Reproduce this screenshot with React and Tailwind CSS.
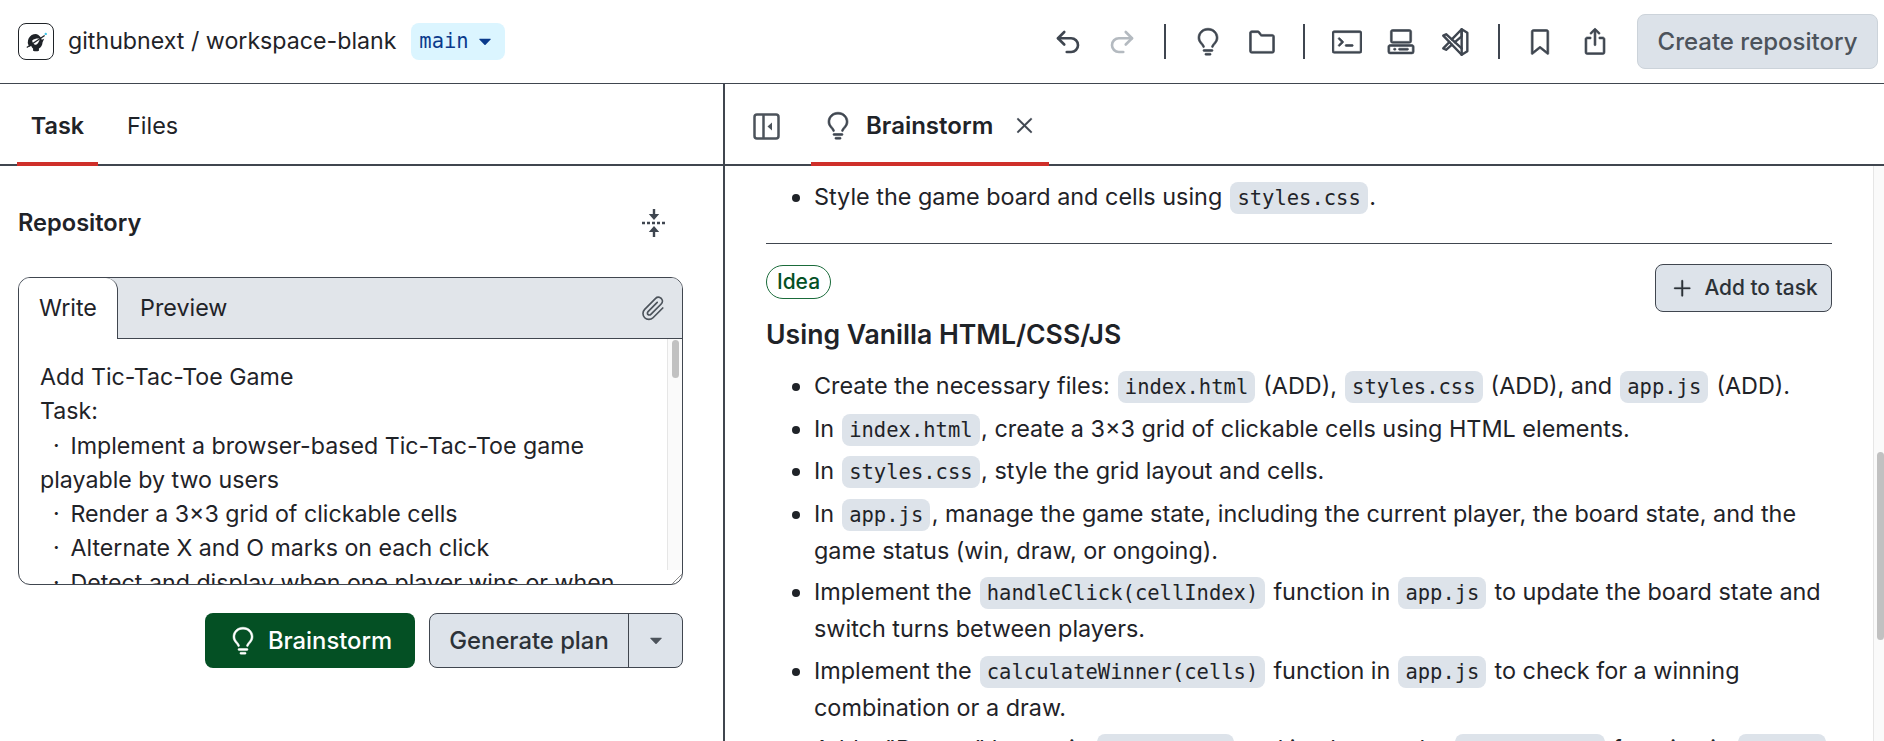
import { Undo2, Redo2 } from 'lucide-react';
import {
  GoLightBulb,
  GoFileDirectory,
  GoTerminal,
  GoCodespaces,
  GoBookmark,
  GoShare,
  GoPaperclip,
  GoX,
  GoPlus,
  GoTriangleDown,
} from 'react-icons/go';
import { TbBrandVscode } from 'react-icons/tb';

const Code = ({ children }) => (
  <code className="mx-[1.5px] rounded-lg bg-[#dde3ea] px-[7px] py-[4px] font-['DejaVu_Sans_Mono',monospace] text-[20.5px] text-[#1f2328]">
    {children}
  </code>
);

const Divider = ({ className }) => <div className={`h-[35px] w-[2px] bg-[#3f4650] ${className}`} />;

function Logo() {
  return (
    <div className="flex h-[37px] w-[36px] items-center justify-center rounded-lg border border-[#1f2328]">
      <svg viewBox="0 0 24 24" className="h-[26px] w-[26px]">
        <path
          fill="#1f2328"
          d="M12 4.500a7.500 7.500 0 0 0-6 12l1.500-1c.4 1 1 2 1.800 2.500V20a7.500 7.500 0 0 0 5.400 0v-2c2-1.200 3.300-3.400 3.300-5.600l1.500-3.400-2.200 1A7.500 7.500 0 0 0 12 4.500Z"
        />
        <path fill="#fff" d="M8.500 10.500c2-1.500 5-2 7-1.500-.3 2.500-2 5-3.500 5.500-1.500.4-3.500-2-3.500-4Z" />
        <path stroke="#1f2328" strokeWidth="1.200" d="M3.500 17 20 6" />
        <circle cx="21" cy="4.500" r="1.100" fill="#3fc6e8" />
      </svg>
    </div>
  );
}

function Header() {
  return (
    <header className="flex h-[84px] shrink-0 items-center border-b border-[#40464f] pl-[18px] pr-[6px]">
      <Logo />
      <span className="ml-[14px] text-[23.2px] text-[#1f2328]">githubnext / workspace-blank</span>
      <button className="ml-[14px] flex h-[37px] w-[94px] items-center justify-center gap-[9px] rounded-lg bg-[#dbf5ff] font-['DejaVu_Sans_Mono',monospace] text-[20.5px] text-[#0a3a8c]">
        main
        <GoTriangleDown className="-ml-[4px] h-[22px] w-[22px]" />
      </button>

      <div className="ml-auto flex items-center text-[#3f4650]">
        <Undo2 className="h-[30px] w-[30px]" strokeWidth={2.1} />
        <Redo2 className="ml-[24px] h-[30px] w-[30px] text-[#b4bac0]" strokeWidth={2.1} />
        <Divider className="mx-[27px]" />
        <GoLightBulb className="h-[30px] w-[30px] stroke-current stroke-[0.5]" />
        <GoFileDirectory className="ml-[24px] h-[30px] w-[30px] stroke-current stroke-[0.5]" />
        <Divider className="ml-[26px] mr-[27px]" />
        <GoTerminal className="h-[30px] w-[30px] stroke-current stroke-[0.5]" />
        <GoCodespaces className="ml-[24px] h-[30px] w-[30px] stroke-current stroke-[0.5]" />
        <TbBrandVscode className="ml-[23px] -mr-[2px] h-[34px] w-[34px]" strokeWidth={1.7} />
        <Divider className="ml-[27px] mr-[25px]" />
        <GoBookmark className="h-[30px] w-[30px] stroke-current stroke-[0.5]" />
        <GoShare className="ml-[25px] h-[30px] w-[30px] stroke-current stroke-[0.5]" />
        <button className="ml-[27px] h-[55px] w-[241px] rounded-lg border border-[#ccd3da] bg-[#dce2e9] text-[24px] font-medium text-[#4c535b]">
          Create repository
        </button>
      </div>
    </header>
  );
}

function TaskPanel() {
  return (
    <aside className="flex w-[725px] shrink-0 flex-col border-r-2 border-[#40464f]">
      <div className="flex h-[82px] shrink-0 border-b-2 border-[#40464f] pl-[17px] text-[23.4px] text-[#1f2328]">
        <div className="-mb-[2px] flex w-[81px] items-center justify-center border-b-4 border-[#cf2f2a] pt-[5px] font-semibold">
          Task
        </div>
        <div className="ml-[29px] flex items-center pt-[3px]">Files</div>
      </div>

      <div className="flex items-center justify-between pl-[18px] pr-[57px] pt-[39px]">
        <h2 className="text-[23.6px] font-semibold leading-[36px] text-[#1f2328]">Repository</h2>
        <svg viewBox="0 0 24 28" className="h-[28px] w-[24px] text-[#3f4650]" fill="currentColor">
          <path d="M10.800 0h2.400v5h4l-5.200 6-5.200-6h4Z" />
          <path d="M10.800 28h2.400v-5h4l-5.200-6-5.200 6h4Z" />
          <path d="M0 12.800h3v2.400H0Zm5 0h3v2.400H5Zm5 0h3v2.400h-3Zm5 0h3v2.400h-3Zm5 0h3v2.400h-3Z" />
        </svg>
      </div>

      <div className="ml-[18px] mt-[36px] h-[308px] w-[665px] overflow-hidden rounded-xl border border-[#40464f]">
        <div className="flex h-[61px] bg-[#e1e5ea] text-[23.3px] text-[#1f2328]">
          <div className="flex w-[99px] items-center justify-center rounded-tl-xl rounded-tr-xl border-r border-[#40464f] bg-white">
            Write
          </div>
          <div className="flex flex-1 items-center justify-between border-b border-[#40464f] pl-[22px] pr-[16px]">
            Preview
            <GoPaperclip className="h-[27px] w-[27px] text-[#4c535b]" />
          </div>
        </div>
        <div className="relative h-[247px] overflow-hidden">
          <div className="w-[612px] whitespace-pre-wrap pl-[21px] pt-[21px] text-[23.2px] leading-[34.3px] text-[#1f2328]">
            {`Add Tic-Tac-Toe Game
Task:
  ·\u2009 Implement a browser-based Tic-Tac-Toe game playable by two users
  ·\u2009 Render a 3×3 grid of clickable cells
  ·\u2009 Alternate X and O marks on each click
  ·\u2009 Detect and display when one player wins or when the game is a draw`}
          </div>
          <div className="absolute right-0 top-0 h-[231px] w-[15px] border-l border-[#e6e6e6] bg-[#fafafa]">
            <div className="mx-auto mt-[1px] h-[38px] w-[7px] rounded bg-[#c1c1c1]" />
          </div>
          <svg viewBox="0 0 14 14" className="absolute bottom-0 right-0 h-[14px] w-[14px] text-[#8c8c8c]" stroke="currentColor">
            <path d="M14 2 2 14M14 6l-8 8M14 10l-4 4" />
          </svg>
        </div>
      </div>

      <div className="mr-[40px] mt-[28px] flex justify-end gap-[14px]">
        <button className="flex h-[55px] w-[210px] items-center justify-center gap-[10px] rounded-lg bg-[#045024] text-[23.8px] font-medium text-white">
          <GoLightBulb className="h-[30px] w-[30px] stroke-current stroke-[0.4]" />
          Brainstorm
        </button>
        <div className="flex h-[55px] w-[254px] overflow-hidden rounded-lg border border-[#40464f] bg-[#dde3ea] text-[23.8px] font-medium text-[#2c3238]">
          <button className="flex-1 border-r border-[#40464f]">Generate plan</button>
          <button className="flex w-[53px] items-center justify-center">
            <GoTriangleDown className="h-[22px] w-[22px] text-[#4c535b]" />
          </button>
        </div>
      </div>
    </aside>
  );
}

function BrainstormPanel() {
  return (
    <main className="flex min-w-0 flex-1 flex-col">
      <div className="flex h-[82px] shrink-0 items-stretch border-b-2 border-[#40464f] pl-[28px] text-[#1f2328]">
        <div className="flex items-center pt-[4px]">
          <svg viewBox="0 0 27 27" className="h-[27px] w-[27px] text-[#4c535b]" fill="none" stroke="currentColor" strokeWidth="2.500">
            <rect x="1.500" y="1.500" width="24" height="24" rx="2.500" />
            <path d="M10.500 1.500v24" />
            <path d="M19 9.500v8l-4.500-4Z" fill="currentColor" stroke="none" />
          </svg>
        </div>
        <div className="-mb-[2px] ml-[31px] flex w-[238px] items-center gap-[13px] border-b-4 border-[#cf2f2a] pl-[12px] pt-[5px]">
          <GoLightBulb className="h-[30px] w-[30px] stroke-current stroke-[0.5] text-[#3f4650]" />
          <span className="text-[24px] font-semibold">Brainstorm</span>
          <GoX className="ml-[5px] h-[27px] w-[27px] stroke-current stroke-[0.4] text-[#3f4650]" />
        </div>
      </div>

      <div className="flex min-h-0 flex-1 overflow-hidden">
        <div className="min-w-0 flex-1 pl-[41px] pr-[41px] text-[23.4px] leading-[36px] text-[#1f2328]">
          <ul className="mt-[13px] list-disc pl-[48px]">
            <li>
              Style the game board and cells using <Code>styles.css</Code>.
            </li>
          </ul>
          <hr className="mt-[27px] border-[#40464f]" />

          <div className="mt-[20px] flex items-start justify-between">
            <span className="mt-[1px] flex h-[34px] w-[65px] items-center justify-center rounded-full border border-[#1a6b3a] text-[21px] font-medium text-[#045024]">
              Idea
            </span>
            <button className="flex h-[48px] w-[177px] items-center justify-center gap-[8px] rounded-lg border border-[#40464f] bg-[#dde3ea] text-[20.900px] font-medium text-[#2c3238]">
              <GoPlus className="h-[27px] w-[27px] stroke-current stroke-[0.3]" />
              Add to task
            </button>
          </div>

          <h3 className="mt-[4px] text-[26.600px] font-semibold leading-[36px]">Using Vanilla HTML/CSS/JS</h3>

          <ul className="mt-[16px] flex list-disc flex-col gap-[5.500px] pl-[48px]">
            <li>
              Create the necessary files: <Code>index.html</Code> (ADD), <Code>styles.css</Code> (ADD), and{' '}
              <Code>app.js</Code> (ADD).
            </li>
            <li>
              In <Code>index.html</Code>, create a 3x3 grid of clickable cells using HTML elements.
            </li>
            <li>
              In <Code>styles.css</Code>, style the grid layout and cells.
            </li>
            <li>
              In <Code>app.js</Code>, manage the game state, including the current player, the board state, and the game
              status (win, draw, or ongoing).
            </li>
            <li>
              Implement the <Code>handleClick(cellIndex)</Code> function in <Code>app.js</Code> to update the board state
              and switch turns between players.
            </li>
            <li>
              Implement the <Code>calculateWinner(cells)</Code> function in <Code>app.js</Code> to check for a winning
              combination or a draw.
            </li>
            <li>
              Add a "Restart" button in <Code>index.html</Code> and implement the <Code>resetGame()</Code> function in{' '}
              <Code>app.js</Code>
            </li>
          </ul>
        </div>
        <div className="w-[11px] shrink-0 border-l border-[#e6e6e6] bg-[#fafafa] pl-[3px]">
          <div className="mt-[286px] h-[188px] w-[7px] rounded bg-[#c1c1c1]" />
        </div>
      </div>
    </main>
  );
}

export default function App() {
  return (
    <div className="flex h-[741px] w-[1884px] flex-col overflow-hidden bg-white font-['Inter',sans-serif]">
      <Header />
      <div className="flex min-h-0 flex-1">
        <TaskPanel />
        <BrainstormPanel />
      </div>
    </div>
  );
}
